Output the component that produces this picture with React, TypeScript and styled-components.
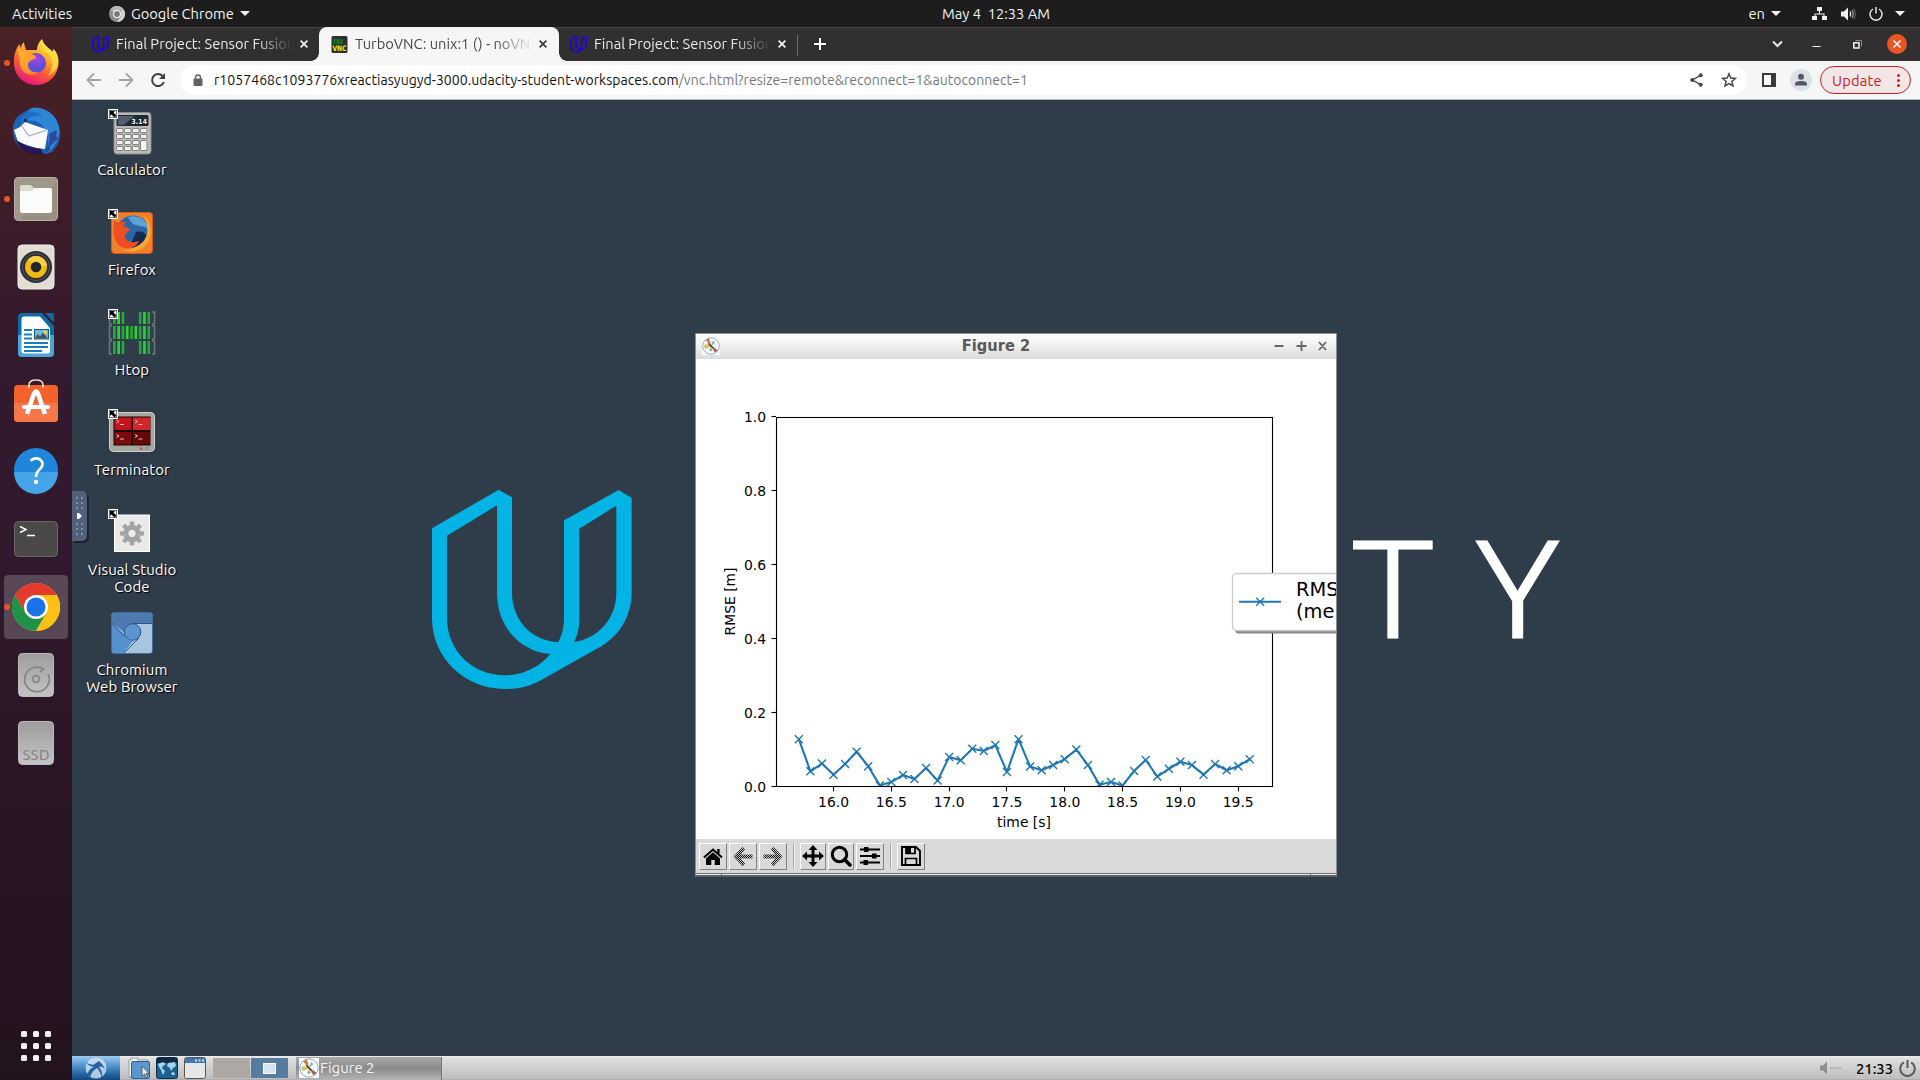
import React from 'react';
import styled, { createGlobalStyle } from 'styled-components';

const Global = createGlobalStyle`
  * { box-sizing: border-box; }
  html, body { margin: 0; padding: 0; background: #2f3c4a; overflow: hidden; }
  svg { display: block; flex: none; }
`;

const ui = `'Ubuntu', 'Noto Sans', 'Open Sans', sans-serif`;

const Screen = styled.div`
  width: 1920px;
  height: 1080px;
  display: flex;
  flex-direction: column;
  overflow: hidden;
  font-family: ${ui};
`;

/* ---------- system top bar ---------- */
const TopBar = styled.header`
  height: 27px;
  flex: none;
  background: #1d1d1d;
  color: #f2f2f2;
  display: grid;
  grid-template-columns: 1fr auto 1fr;
  align-items: center;
  font-size: 14.67px;
  line-height: 26px;
`;
const TopLeft = styled.div`
  display: flex;
  align-items: center;
  padding-left: 12px;
`;
const TopRight = styled.div`
  display: flex;
  align-items: center;
  justify-content: flex-end;
  padding-right: 15px;
`;
const BarText = styled.span<{ $ls?: number; $w?: number; $ml?: number }>`
  letter-spacing: ${p => p.$ls ?? 0}px;
  width: ${p => (p.$w ? `${p.$w}px` : 'auto')};
  margin-left: ${p => p.$ml ?? 0}px;
  white-space: pre;
`;
const Caret = styled.i<{ $ml?: number }>`
  margin-left: ${p => p.$ml ?? 6}px;
  border: 5px solid transparent;
  border-top-color: #f2f2f2;
  border-bottom: 0;
`;
const Gap = styled.i<{ $w: number }>`
  width: ${p => p.$w}px;
  flex: none;
`;

const Body = styled.div`
  flex: 1;
  display: flex;
  min-height: 0;
`;

/* ---------- dock ---------- */
const Dock = styled.nav`
  width: 72px;
  flex: none;
  background: linear-gradient(#4a2124 0, #3f1d28 150px, #331a2e 340px, #2f192c 560px, #24131f 1000px, #22141f 100%);
  display: flex;
  flex-direction: column;
  align-items: center;
  gap: 4px;
  padding-top: 4px;
`;
const DockSlot = styled.div<{ $active?: boolean; $running?: boolean }>`
  width: 64px;
  height: 64px;
  border-radius: 4px;
  flex: none;
  display: grid;
  place-items: center;
  position: relative;
  background: ${p => (p.$active ? 'rgba(255,255,255,.2)' : 'transparent')};
  &::before {
    content: '';
    display: ${p => (p.$running ? 'block' : 'none')};
    position: absolute;
    left: 0;
    top: 29px;
    width: 6px;
    height: 6px;
    border-radius: 50%;
    background: #e95420;
  }
`;
const AppGrid = styled.div`
  margin: auto 0 19px;
  display: grid;
  grid-template-columns: repeat(3, 6px);
  gap: 6px;
  i { width: 6px; height: 6px; border-radius: 1.5px; background: #f4f2f2; }
`;

/* ---------- browser ---------- */
const Browser = styled.main`
  flex: 1;
  min-width: 0;
  display: flex;
  flex-direction: column;
`;
const TabStrip = styled.div`
  height: 34px;
  flex: none;
  background: #322f30;
  border-top: 1px solid #454343;
  display: flex;
  align-items: stretch;
`;
const Tab = styled.div<{ $active?: boolean; $w: number; $pl: number }>`
  width: ${p => p.$w}px;
  flex: none;
  margin-top: -1px;
  padding-left: ${p => p.$pl}px;
  display: flex;
  align-items: center;
  position: relative;
  color: ${p => (p.$active ? '#45474a' : '#e9e9e9')};
  background: ${p => (p.$active ? '#f6f6f7' : 'transparent')};
  border-radius: 8px 8px 0 0;
  &::before, &::after {
    content: '';
    display: ${p => (p.$active ? 'block' : 'none')};
    position: absolute;
    bottom: 0;
    width: 8px;
    height: 8px;
  }
  &::before { left: -8px; background: radial-gradient(circle at 0 0, transparent 7.5px, #f6f6f7 8px); }
  &::after { right: -8px; background: radial-gradient(circle at 100% 0, transparent 7.5px, #f6f6f7 8px); }
`;
const TabTitle = styled.span`
  margin-left: 7px;
  width: 176px;
  overflow: hidden;
  white-space: pre;
  font-size: 14.67px;
  line-height: 30px;
  mask-image: linear-gradient(90deg, #000 140px, transparent 177px);
`;
const TabClose = styled.span`
  margin-left: 8px;
`;
const TabEnd = styled.div`
  width: 1px;
  height: 21px;
  margin-top: 7px;
  background: #6c6a6b;
`;
const NewTab = styled.div`
  margin-left: 16px;
  align-self: center;
  margin-bottom: 1px;
`;
const WinControls = styled.div`
  margin-left: auto;
  padding-right: 13px;
  padding-bottom: 1px;
  display: flex;
  align-items: center;
`;
const Toolbar = styled.div`
  height: 39px;
  flex: none;
  background: #f6f6f7;
  border-bottom: 1px solid #b4b8bb;
  display: flex;
  align-items: center;
  padding-left: 14px;
`;
const Omnibox = styled.div`
  margin-left: 14px;
  width: 1567px;
  height: 30px;
  border-radius: 15px;
  background: #fff;
  display: flex;
  align-items: center;
  padding: 0 10px 0 13px;
  font-size: 14px;
`;
const Url = styled.span`
  margin-left: 11px;
  flex: 1;
  white-space: nowrap;
  color: #111;
`;
const Domain = styled.span`letter-spacing: 0.06px;`;
const Path = styled.span`color: #75787b; letter-spacing: 0.02px;`;
const Avatar = styled.div`
  width: 22px;
  height: 22px;
  border-radius: 50%;
  background: #dee1e6;
  margin-left: 14px;
`;
const Update = styled.div`
  margin-left: 8px;
  width: 91px;
  height: 28px;
  border: 1px solid #c5221f;
  border-radius: 14px;
  background: #f3e6e7;
  color: #c5221f;
  display: flex;
  align-items: center;
  font-size: 14.67px;
  letter-spacing: 0.2px;
  padding: 0 10px 0 11px;
`;
const Dots = styled.span`
  margin-left: auto;
  display: grid;
  gap: 2px;
  i { width: 3px; height: 3px; border-radius: 50%; background: #c5221f; }
`;

/* ---------- remote desktop ---------- */
const Desktop = styled.section`
  flex: 1;
  position: relative;
  background: #2f3c4a;
  overflow: hidden;
`;
const Wallmark = styled.div`
  position: absolute;
  left: 348px;
  top: 380px;
`;
const Letter = styled.span<{ $x: number; $sx: number }>`
  position: absolute;
  left: ${p => p.$x}px;
  top: 394px;
  color: #fff;
  font: 300 132px/184px 'Open Sans', 'Noto Sans', sans-serif;
  -webkit-text-stroke: 3px #fff;
  transform: scaleX(${p => p.$sx});
  transform-origin: 0 0;
`;
const IconColumn = styled.div`
  width: 120px;
  display: grid;
  grid-auto-rows: 100px;
  padding-top: 8px;
`;
const Shortcut = styled.div`
  display: flex;
  flex-direction: column;
  align-items: center;
  color: #fff;
  font-size: 15px;
  letter-spacing: 0.1px;
  line-height: 17px;
  text-align: center;
  white-space: pre-line;
  text-shadow: 1px 1px 1px #000;
`;
const Glyph = styled.div`
  width: 48px;
  height: 48px;
  margin-bottom: 5px;
  position: relative;
`;
const Badge = styled.div`
  position: absolute;
  left: 0;
  top: 1px;
`;
const Handle = styled.div`
  position: absolute;
  left: 0;
  top: 391px;
  width: 15px;
  height: 50px;
  background: #4f6078;
  border-radius: 0 5px 5px 0;
  box-shadow: 2px 2px 0 #1c242e;
`;

const Figure = styled.div`
  position: absolute;
  left: 623px;
  top: 233px;
  width: 642px;
  height: 544px;
  border: 1px solid #8a8f94;
  border-bottom: 2px solid #5c6268;
  background: #d9d9d9;
  display: flex;
  flex-direction: column;
`;
const TitleBar = styled.div`
  height: 25px;
  flex: none;
  background: linear-gradient(#fff, #f2f2f2 40%, #dcdcdc);
  display: flex;
  align-items: center;
  padding: 0 8px 1px 6px;
`;
const Title = styled.div`
  flex: 1;
  text-align: center;
  color: #5a5a5a;
  font: bold 16.3px/22px 'DejaVu Sans Condensed', 'DejaVu Sans', sans-serif;
  font-stretch: condensed;
`;
const FigTools = styled.div`
  height: 34px;
  display: flex;
  align-items: center;
  padding-left: 3px;
  gap: 2px;
`;
const ToolButton = styled.div<{ $w?: number }>`
  width: ${p => p.$w ?? 28}px;
  height: 27px;
  border: 1px solid;
  border-color: #fff #828282 #828282 #fff;
  display: grid;
  place-items: center;
`;
const ToolSep = styled.div`
  width: 2px;
  height: 26px;
  margin: 0 3px 0 4px;
  border-left: 1px solid #a8a8a8;
  border-right: 1px solid #f2f2f2;
`;
const Grip = styled.div`
  flex: 1;
  border-top: 1px solid #6e6e6e;
  background: #efefef;
  display: flex;
  justify-content: space-between;
  padding: 0 25px;
  i { width: 1px; background: #555; }
`;

const Panel = styled.footer`
  height: 24px;
  flex: none;
  display: flex;
  align-items: center;
  background: linear-gradient(#ececec 0, #dedede 12%, #bdbdbd 95%, #a5a5a5);
`;
const StartButton = styled.div`
  width: 48px;
  height: 24px;
  background: linear-gradient(#9ccbef, #5b9dd2 35%, #1f5f9a 80%, #174a7c);
  display: grid;
  place-items: center;
`;
const Launchers = styled.div`
  display: flex;
  gap: 6px;
  margin-left: 8px;
`;
const Desk = styled.div<{ $current?: boolean }>`
  width: 37px;
  height: 20px;
  margin-right: 1px;
  background: ${p => (p.$current ? '#567ca0' : '#ada8a3')};
  display: grid;
  place-items: center;
  i { width: 13px; height: 11px; background: #d6e4f1; border: 1px solid #fff; }
`;
const Task = styled.div`
  width: 146px;
  height: 23px;
  margin-left: 7px;
  padding-left: 3px;
  border-right: 1px solid #777;
  background: linear-gradient(#a8a8a8, #8b8b8b 50%, #b4b4b4);
  display: flex;
  align-items: center;
  color: #f3f3f3;
  font-size: 15px;
  line-height: 20px;
  letter-spacing: 0.15px;
`;
const Tray = styled.div`
  margin-left: auto;
  padding-right: 4px;
  display: flex;
  align-items: center;
`;
const Clock = styled.span`
  margin: 0 6px 0 14px;
  color: #000;
  font-size: 15px;
  font-weight: 500;
  letter-spacing: -0.1px;
`;

/* ---------- drawings ---------- */
const U_PATH =
  'M36 145L236 29L276 52V338C276 420 335 483 415 486C427 465 432 440 432 415V121L596 30L635 54V338C635 415 590 475 533 505L360 602C330 618 300 627 255 627C130 627 36 530 36 415ZM81 167L231 76V338C231 440 300 515 391 522C360 560 310 586 255 586C155 586 81 510 81 415ZM478 146L589 77V338C589 415 535 475 462 486C474 465 478 440 478 415Z';

const UFavicon = () => (
  <svg width="17" height="18" viewBox="30 20 612 620"><path d={U_PATH} fill="#1d00f5" fillRule="evenodd" stroke="#1d00f5" strokeWidth="8" /></svg>
);

const NoVncIcon = () => (
  <svg width="17" height="17" viewBox="0 0 17 17">
    <rect x=".5" width="16" height="17" rx="1.500" fill="#2d3033" />
    <text x="2" y="8" fontFamily="DejaVu Sans" fontWeight="700" fontSize="8" fill="#0a8a14" textLength="10">no</text>
    <text x="1.500" y="15" fontFamily="DejaVu Sans" fontWeight="700" fontSize="7.500" fill="#f1ee10" textLength="14" lengthAdjust="spacingAndGlyphs">VNC</text>
  </svg>
);

const Cross = ({ color, size = 8, w = 1.8 }: { color: string; size?: number; w?: number }) => (
  <svg width={size} height={size} viewBox="0 0 8 8"><path d="M.6.6l6.8 6.8M7.4.6L.6 7.4" stroke={color} strokeWidth={w} /></svg>
);

const MplIcon = ({ s = 18 }: { s?: number }) => (
  <svg width={s} height={s} viewBox="0 0 20 20">
    <rect width="20" height="20" fill="#fff" />
    <circle cx="10" cy="10" r="9.2" fill="#fcfdfe" stroke="#6f9bbd" strokeWidth=".9" />
    <circle cx="10" cy="10" r="5" fill="none" stroke="#c6ced6" strokeWidth=".6" />
    <path d="M10 10L4.6 3.4L7.6 1.8Z" fill="#e07838" stroke="#8a4a20" strokeWidth=".4" />
    <path d="M10 10L2.6 9.4L3.8 12.4Z" fill="#f1cf3c" stroke="#8d7a20" strokeWidth=".5" />
    <path d="M10 10L4 7.8L3.4 11Z" fill="#e8c53c" />
    <path d="M10 10L12.6 4.4L14 6Z" fill="#8fc08a" stroke="#557" strokeWidth=".3" />
    <path d="M10 10L8.6 15.6L11 15.4Z" fill="#5aa06a" />
    <path d="M10 10L14.6 17L17.2 14.8Z" fill="#c9603a" stroke="#6a3320" strokeWidth=".4" />
    <path d="M7 7.4L12.6 12.2" stroke="#333" strokeWidth="1.2" />
  </svg>
);

const ffDefs = (
  <defs>
    <linearGradient id="ffa" x1=".8" y1="0" x2=".3" y2="1"><stop offset="0" stopColor="#fff24a" /><stop offset=".35" stopColor="#ffb128" /><stop offset=".65" stopColor="#ff5a36" /><stop offset="1" stopColor="#e3127f" /></linearGradient>
    <radialGradient id="ffb" cx=".55" cy=".3"><stop offset="0" stopColor="#a546e8" /><stop offset="1" stopColor="#5b4fd8" /></radialGradient>
    <linearGradient id="ffc" x1="0" y1="0" x2="1" y2="1"><stop offset="0" stopColor="#ffc22c" /><stop offset="1" stopColor="#ff7c30" /></linearGradient>
  </defs>
);

const DockFirefox = () => (
  <svg width="48" height="48" viewBox="0 0 48 48">
    {ffDefs}
    <path d="M30 0C26 4 25 8 25 11L14 11C13 8 12 5 12 3C10 5 9 7 9 9C8 8 7.500 6 7.500 5C3 11 1.500 18 2 25C2.500 37 12 46 24 46C37 46 46.500 36 46.500 23C46.500 17 44 12 41 10C41 11 41.500 12 41 13C37 9 31 6 30 0Z" fill="url(#ffa)" />
    <path d="M30 0C28 8 31 12 36 15C42 20 42 31 35 37C44 34 47.500 25 46 18C45 14 43 11 41 10C41 11 41.500 12 41 13C37 9 31 6 30 0Z" fill="#ffe14a" opacity=".75" />
    <circle cx="24" cy="24" r="10" fill="url(#ffb)" />
    <path d="M5 8C8 13 15 13 19 15C24 16 25 18 23 20C20 21 17 22 16 25C16 31 20 34 26 33C22 38 12 36 9 29C7 23 8 16 5 8Z" fill="url(#ffc)" />
  </svg>
);

const DockThunderbird = () => (
  <svg width="48" height="48" viewBox="0 0 48 48">
    <path d="M17 2C24-1 34 1 41 8C48 16 50 28 46 37L40 45L33 47L24 43L8 41C3 36 0 28 1 20C2 13 6 8 12 5Z" fill="#1c61b8" />
    <path d="M20 1C32-1 44 7 47 20C48 29 45 39 34 47C39 38 36 29 33 23C29 13 18 12 12 15C14 10 16 4 20 1Z" fill="#2f86d4" />
    <path d="M11 9C16 3 25 3 31 10C24 7 16 10 10 18C8 14 9 11 11 9Z" fill="#1f6fc9" />
    <path d="M2 23L8 20L13 15L36 23L33 42L24 41L6 35Z" fill="#fafafc" />
    <path d="M9 18L17 29L35 23" fill="none" stroke="#a9adb9" strokeWidth="1.1" />
    <path d="M4 33L15 39L29 42L31 47C19 49 7 44 4 33Z" fill="#281653" />
    <path d="M37 27L45 23L44 30L47 31L38 39L38 43L32 47C38 40 38 33 37 27Z" fill="#31449e" />
    <circle cx="13.500" cy="13.500" r="1.700" fill="#16294f" />
  </svg>
);

const DockFiles = () => (
  <svg width="46" height="46" viewBox="0 0 46 46">
    <rect x="1" y="1" width="44" height="44" rx="4.500" fill="#989080" />
    <path d="M5 1H45V5L5 45Q1 45 1 40V5Q1 1 5 1Z" fill="#fff" opacity=".07" />
    <rect x="1.500" y="1.500" width="43" height="43" rx="4.500" fill="none" stroke="#b6af9f" />
    <path d="M7 11Q7 9 9 9H17Q18.500 9 19.500 10.500L21 12H32V25H7Z" fill="#dedbd0" />
    <path d="M7 16Q7 15 9 15H19L21.500 12.500Q22 12 24 12H37Q39 12 39 14V34.500Q39 37 36.500 37H9.500Q7 37 7 34.500Z" fill="#fbfbfa" />
  </svg>
);

const DockRhythmbox = () => (
  <svg width="38" height="46" viewBox="0 0 38 46">
    <rect x="1" y="1" width="36" height="44" rx="4" fill="#e2ddd3" stroke="#f1eee8" />
    <circle cx="19" cy="23" r="16" fill="#2d3037" />
    <circle cx="19" cy="23" r="13.600" fill="none" stroke="#5a5c60" strokeWidth=".8" />
    <circle cx="19" cy="23" r="11" fill="#f0b90f" />
    <path d="M19 23L11 15.500A11 11 0 0 1 30 22Z" fill="#f8cf40" />
    <circle cx="19" cy="23" r="5.300" fill="#24262c" />
  </svg>
);

const DockWriter = () => (
  <svg width="38" height="46" viewBox="0 0 38 46">
    <path d="M5 1H25L37 14V41Q37 45 33 45H5Q1 45 1 41V5Q1 1 5 1Z" fill="#0d6ba5" />
    <path d="M1 23H37V41Q37 45 33 45H5Q1 45 1 41Z" fill="#4ba5d6" />
    <path d="M28 1H35Q37 1 37 3V11Z" fill="#13689c" />
    <path d="M7 4.500H23L33 16V39Q33 41.500 31 41.500H7Q4.500 41.500 4.500 39V7Q4.500 4.500 7 4.500Z" fill="#fff" />
    <path d="M7 18H15M7 22.500H15M7 26.500H15M7 31H31M7 35H31M7 39H25" stroke="#1b7cbc" strokeWidth="1.800" />
    <rect x="17.500" y="17.500" width="14" height="9.500" fill="#6db7df" stroke="#145a86" />
    <circle cx="28" cy="20.500" r="2" fill="#f7cc3e" />
    <path d="M18 26.500L21 22L23 24.500L26 20.500L31 26.500Z" fill="#48545c" />
  </svg>
);

const DockSoftware = () => (
  <svg width="46" height="48" viewBox="0 0 46 48">
    <rect x="1" y="6" width="44" height="37" rx="4" fill="#f4622c" />
    <path d="M1 24H45V39Q45 43 41 43H5Q1 43 1 39Z" fill="#f5774a" />
    <path d="M16 9V6Q16 1 23 1T30 6V9" fill="none" stroke="#f0d9b6" strokeWidth="1.700" />
    <path d="M14 35L20.500 16Q23 9 25.500 16L32 35" fill="none" stroke="#fff" strokeWidth="4.600" />
    <path d="M11 28H35" stroke="#fff" strokeWidth="4" strokeLinecap="round" />
  </svg>
);

const DockHelp = () => (
  <svg width="46" height="48" viewBox="0 0 46 48">
    <circle cx="23" cy="23" r="22" fill="#1f86dc" />
    <path d="M1 25A22 22 0 0 0 45 25Z" fill="#45a4e8" />
    <path d="M17.500 13.500Q23 10 27 12.500Q31.500 16 28 21Q23 25 23 30" fill="none" stroke="#fff" strokeWidth="2.700" />
    <circle cx="23" cy="35" r="2.200" fill="#fff" />
  </svg>
);

const DockTerminal = () => (
  <svg width="46" height="38" viewBox="0 0 46 38">
    <rect x="1.500" y="1.500" width="43" height="35" rx="4" fill="#4a4948" stroke="#6b6968" />
    <path d="M7 6.500L13 9.500L7 12.500" fill="none" stroke="#fff" strokeWidth="1.500" />
    <path d="M14 15.500H22" stroke="#fff" strokeWidth="1.500" />
  </svg>
);

const DockChrome = () => (
  <svg width="48" height="48" viewBox="0 0 48 48">
    <circle cx="24" cy="24" r="24" fill="#fbc116" />
    <path d="M3.200 12A24 24 0 0 1 44.800 12H24Z" fill="#e33b2e" />
    <path d="M3.200 12A24 24 0 0 0 24 48L34.400 30L24 24L13.600 30Z" fill="#1f9149" />
    <path d="M3.200 12L13.600 30L24 24V12Z" fill="#e33b2e" />
    <path d="M24 48L34.400 30L24 24V12H44.800A24 24 0 0 1 24 48Z" fill="#fbc116" />
    <circle cx="24" cy="24" r="12" fill="#fff" />
    <circle cx="24" cy="24" r="9.500" fill="#1a73e8" />
  </svg>
);

const DriveBase = ({ children, id }: { children: React.ReactNode; id: string }) => (
  <svg width="38" height="46" viewBox="0 0 38 46">
    <defs><linearGradient id={id} x2="0" y2="1"><stop offset="0" stopColor="#9d9d9d" /><stop offset="1" stopColor="#c4c4c4" /></linearGradient></defs>
    <rect x="1.500" y="1.500" width="35" height="43" rx="4" fill={`url(#${id})`} stroke="#bcbcbc" />
    {children}
  </svg>
);
const DockDisk = () => (
  <DriveBase id="dg1">
    <path d="M31 22A12.300 12.300 0 1 1 26.500 17L23 20" fill="none" stroke="#858585" strokeWidth="1.700" />
    <circle cx="19" cy="27" r="3.300" fill="none" stroke="#858585" strokeWidth="1.700" />
  </DriveBase>
);
const DockSsd = () => (
  <DriveBase id="dg2">
    <text x="5.500" y="40" fontFamily="Noto Sans" fontSize="15" fill="#858585" textLength="27" lengthAdjust="spacingAndGlyphs">SSD</text>
  </DriveBase>
);

const LinkBadge = () => (
  <svg width="10" height="10" viewBox="0 0 10 10">
    <rect width="10" height="10" fill="#fff" />
    <rect x="1" y="1" width="8" height="8" fill="#000" />
    <path d="M1.500 1.500H8.500V8.500H1.500Z" fill="#fff" />
    <path d="M2 2H7L5.500 3.500L8.500 6.500L6.500 8.500L3.500 5.500L2 7Z" fill="#000" />
  </svg>
);

const Calculator = () => (
  <svg width="48" height="48" viewBox="0 0 48 48">
    <rect x="6" y="4.500" width="37" height="41.500" rx="3" fill="#b9b9b6" stroke="#8c8c8a" />
    <rect x="8.500" y="7" width="32" height="11" rx="1.500" fill="#1e2b38" />
    <path d="M10 8H26L16 17H10Z" fill="#74808d" opacity=".6" />
    <text x="23.500" y="15.500" fontFamily="DejaVu Sans" fontWeight="700" fontSize="7" fill="#fff" textLength="15.500" lengthAdjust="spacingAndGlyphs">3.14</text>
    {[0, 1, 2, 3].map(r => [0, 1, 2, 3].map(c =>
      r === 3 && c === 3 ? null : (
        <rect key={`${r}${c}`} x={8.500 + c * 8} y={20.500 + r * 6} width="6.500" height={r === 2 && c === 3 ? 10 : 4} rx="1" fill="#f2f2f2" stroke="#6b6b69" strokeWidth=".8" />
      )))}
  </svg>
);

const OldFirefox = () => (
  <svg width="48" height="48" viewBox="0 0 48 48">
    <rect x="3.500" y="4.500" width="41" height="41" rx="3" fill="#f0812c" stroke="#d9581a" />
    <circle cx="25" cy="24" r="16.500" fill="#2b67a5" />
    <path d="M20 9C30 6 40 12 41 22C36 16 30 20 24 15Z" fill="#5fa3d6" />
    <path d="M28 24C36 22 40 27 38 33C34 40 26 41 22 38Z" fill="#142c55" />
    <path d="M6 12C9 16 12 13 18 14L15 18L22 21C20 25 16 25 17 29C19 35 26 35 31 33C27 42 15 43 9 35C5 29 5 19 6 12Z" fill="#ee4e22" />
    <path d="M36 8C44 14 46 27 38 37C33 43 23 45 15 42C28 41 37 35 39 26C40 19 39 13 36 8Z" fill="#fba62e" />
  </svg>
);

const Htop = () => {
  const rows = [[4, 12], [18, 13], [33, 13]];
  return (
    <svg width="48" height="48" viewBox="0 0 48 48">
      {rows.map(([y, h], r) => (
        <g key={y}>
          <path d={`M4 ${y}H1.500V${y + h}H4M44 ${y}H46.500V${y + h}H44`} fill="none" stroke="#72777b" strokeWidth="1.500" />
          {Array.from({ length: 9 }, (_, i) => i).filter(i => r === 1 || i < 3 || i > 5).map(i => (
            <rect key={i} x={5 + i * 4.300} y={y} width="2.700" height={h} fill={i % 2 ? '#2fce3c' : '#25a833'} />
          ))}
        </g>
      ))}
    </svg>
  );
};

const Terminator = () => (
  <svg width="48" height="48" viewBox="0 0 48 48">
    <rect x="1.500" y="4.500" width="45" height="39" rx="4" fill="#a5a69f" stroke="#cfd0ca" />
    <rect x="5.500" y="8.500" width="37" height="29" fill="#1b0505" />
    {[[6.500, 9.500, '#c3141b'], [25, 9.500, '#d6242b'], [6.500, 24, '#7c0a0e'], [25, 24, '#680709']].map(([x, y, f]) => (
      <g key={`${x}${y}`}>
        <rect x={x} y={y} width="17" height="12.500" fill={f as string} />
        <path d={`M${+x + 2} ${+y + 2.500}l2.500 1.500l-2.500 1.500M${+x + 5.500} ${+y + 7}h4`} fill="none" stroke="#f4d5d5" strokeWidth=".9" />
      </g>
    ))}
    <circle cx="33" cy="40.500" r="1.200" fill="#f03050" />
    <circle cx="39" cy="40.500" r="1.200" fill="none" stroke="#777" strokeWidth=".6" />
  </svg>
);

const VsCode = () => (
  <svg width="48" height="48" viewBox="0 0 48 48">
    <rect x="6.500" y="7" width="35" height="36.500" fill="#e9e9e9" stroke="#fff" />
    <g transform="translate(24 25.500)">
      {[0, 45, 90, 135].map(a => <rect key={a} x="-2.200" y="-12" width="4.400" height="24" rx="1" fill="#a4a4a4" transform={`rotate(${a})`} />)}
      <circle r="6.300" fill="none" stroke="#a4a4a4" strokeWidth="5" />
      <circle r="4.200" fill="#ececec" stroke="#8e8e8e" strokeWidth=".8" />
    </g>
  </svg>
);

const Chromium = () => (
  <svg width="48" height="48" viewBox="0 0 48 48">
    <rect x="3.500" y="4.500" width="41" height="41" rx="3" fill="#90b6da" stroke="#3f6da4" />
    <path d="M4 7Q4 5 6 5H42Q44 5 44 7V15.500H24L16 24L4 15Z" fill="#4d7bb0" />
    <path d="M4 15L16 27Q19 33 25 33L16 45H6Q4 45 4 43Z" fill="#5590cf" />
    <path d="M25 33L16 45H42Q44 45 44 43V15.500H26Q33 18 33 25Q32 31 25 33Z" fill="#a8c5de" />
    <path d="M44 15.500H24M16 28L4 15M31 30L16 45" stroke="#264e82" strokeWidth=".9" fill="none" />
    <circle cx="24.500" cy="24" r="8.300" fill="#5f93d0" stroke="#29538a" strokeWidth="1" />
  </svg>
);

const rmse = [
  0.128, 0.041, 0.062, 0.032, 0.061, 0.094, 0.055, 0.003, 0.012, 0.031, 0.02, 0.05, 0.016, 0.08, 0.071, 0.102, 0.096, 0.112, 0.039, 0.128,
  0.054, 0.044, 0.058, 0.074, 0.1, 0.058, 0.005, 0.012, 0.003, 0.042, 0.072, 0.027, 0.048, 0.067, 0.058, 0.032, 0.061, 0.044, 0.055, 0.074,
];
const px = (t: number) => 80.3 + ((t - 15.505) / 4.29) * 496;
const py = (v: number) => 427.5 - v * 369.500;

const Plot = () => {
  const pts = rmse.map((v, i) => [px(15.7 + i * 0.1), py(v)]);
  return (
    <svg width="640" height="480" viewBox="0 0 640 480" fontFamily="DejaVu Sans" fontSize="13.900">
      <defs><clipPath id="ax"><rect x="80" y="58" width="497" height="370" /></clipPath></defs>
      <rect width="640" height="480" fill="#fff" />
      <g clipPath="url(#ax)" stroke="#1f77b4" fill="none">
        <polyline points={pts.map(p => p.join(',')).join(' ')} strokeWidth="2.100" strokeLinejoin="round" />
        <path d={pts.map(([x, y]) => `M${x - 4} ${y - 4}l8 8m0 -8l-8 8`).join('')} strokeWidth="1.400" />
      </g>
      <rect x="80.500" y="58.500" width="496" height="369" fill="none" stroke="#000" strokeWidth="1.100" />
      {[0, 0.2, 0.4, 0.6, 0.8, 1].map(v => (
        <g key={v}>
          <path d={`M75.500 ${Math.round(py(v)) - 0.5}H80`} stroke="#000" strokeWidth="1.100" />
          <text x="70" y={py(v) + 5} textAnchor="end">{v.toFixed(1)}</text>
        </g>
      ))}
      {[16, 16.5, 17, 17.5, 18, 18.5, 19, 19.5].map(t => (
        <g key={t}>
          <path d={`M${Math.floor(px(t)) + 0.5} 428V432.500`} stroke="#000" strokeWidth="1.100" />
          <text x={px(t)} y="448" textAnchor="middle">{t.toFixed(1)}</text>
        </g>
      ))}
      <text x="328" y="467.500" textAnchor="middle">time [s]</text>
      <text transform="translate(38.500 242.500) rotate(-90)" textAnchor="middle">RMSE [m]</text>
      <rect x="539" y="217" width="140" height="57.500" rx="4" fill="#888" />
      <rect x="536.500" y="214.500" width="140" height="57" rx="4" fill="#fff" stroke="#ccc" strokeWidth="1.300" />
      <path d="M543 242.800H585" stroke="#1f77b4" strokeWidth="2.100" />
      <path d="M560.200 238.800l8 8m0 -8l-8 8" stroke="#1f77b4" strokeWidth="1.400" />
      <g fontSize="19.400"><text x="600" y="237">RMS</text><text x="600" y="259">(me</text></g>
    </svg>
  );
};

const tool = { width: 24, height: 24, viewBox: '0 0 24 24' };
const HomeIcon = () => (
  <svg {...tool}><path d="M12 4.200L2.300 12.800L3.600 14.200L12 6.900L20.400 14.200L21.700 12.800L18.600 10V5H16.200V7.900Z" /><path d="M12 8.300L5 14.400V21H10.300V16H13.700V21H19V14.400Z" /></svg>
);
const ArrowIcon = ({ flip }: { flip?: boolean }) => (
  <svg {...tool}>
    <defs><pattern id="stipple" width="2" height="2" patternUnits="userSpaceOnUse"><rect width="2" height="2" fill="#c4c4c4" /><rect width="1" height="1" fill="#111" /><rect x="1" y="1" width="1" height="1" fill="#111" /></pattern></defs>
    <path transform={flip ? 'translate(24 0) scale(-1 1)' : undefined} d="M2.500 12.500L11.500 3L14 5.500L9.500 10.500H21.500V14.500H9.500L14 19.500L11.500 22Z" fill="url(#stipple)" />
  </svg>
);
const PanIcon = () => (
  <svg {...tool}><path d="M12 1L16.500 6H13.500V10.500H18V7.500L23 12L18 16.500V13.500H13.500V18H16.500L12 23L7.500 18H10.500V13.500H6V16.500L1 12L6 7.500V10.500H10.500V6H7.500Z" /></svg>
);
const ZoomIcon = () => (
  <svg {...tool}><circle cx="10.500" cy="10.500" r="7.200" fill="none" stroke="#000" strokeWidth="3" /><path d="M15.500 15.500L21 21" stroke="#000" strokeWidth="3.600" strokeLinecap="round" /></svg>
);
const SlidersIcon = () => (
  <svg {...tool}><path d="M2 5.500H22M2 12H22M2 18.500H22" stroke="#000" strokeWidth="1.800" /><path d="M6 3h4.500v5h-4.500zM14 9.500h4.500v5h-4.500zM5.500 16h4.500v5h-4.500z" /></svg>
);
const SaveIcon = () => (
  <svg {...tool}><path d="M3 3H17L21 7V21H3Z" fill="none" stroke="#000" strokeWidth="1.900" /><path d="M7 3.500V9.500H16V3.500M6.500 20.500V14.500H17.500V20.500" fill="none" stroke="#000" strokeWidth="1.700" /><path d="M7 3H12V9H7Z" /></svg>
);

const dockItems: { Icon: React.FC; running?: boolean; active?: boolean }[] = [
  { Icon: DockFirefox, running: true }, { Icon: DockThunderbird }, { Icon: DockFiles, running: true }, { Icon: DockRhythmbox },
  { Icon: DockWriter }, { Icon: DockSoftware }, { Icon: DockHelp }, { Icon: DockTerminal },
  { Icon: DockChrome, running: true, active: true }, { Icon: DockDisk }, { Icon: DockSsd },
];
const shortcuts: { Icon: React.FC; name: string; link?: boolean }[] = [
  { Icon: Calculator, name: 'Calculator', link: true }, { Icon: OldFirefox, name: 'Firefox', link: true }, { Icon: Htop, name: 'Htop', link: true },
  { Icon: Terminator, name: 'Terminator', link: true }, { Icon: VsCode, name: 'Visual Studio\nCode', link: true }, { Icon: Chromium, name: 'Chromium\nWeb Browser' },
];

const Speaker = () => (
  <svg width="15" height="14" viewBox="0 0 15 14"><path d="M0 4.500H3L7 .5V13.500L3 9.500H0Z" fill="#f2f2f2" /><path d="M9 4.500Q10.500 7 9 9.500" stroke="#f2f2f2" fill="none" strokeWidth="1.300" /><path d="M11 3Q13.500 7 11 11" stroke="#aaa" fill="none" strokeWidth="1.200" /><path d="M12.800 1.500Q16 7 12.800 12.500" stroke="#666" fill="none" /></svg>
);
const Power = ({ color = '#f2f2f2', w = 1.4, s = 14 }) => (
  <svg width={s} height={s} viewBox="0 0 14 14"><path d="M4 2A6 6 0 1 0 10 2M7 0V6.500" fill="none" stroke={color} strokeWidth={w} /></svg>
);

export default function App() {
  return (
    <Screen>
      <Global />
      <TopBar>
        <TopLeft>
          <BarText $w={97}>Activities</BarText>
          <svg width="16" height="16" viewBox="0 0 16 16"><circle cx="8" cy="8" r="8" fill="#8e8e8e" /><path d="M8 8L1 4A8 8 0 0 1 15 4H8Z" fill="#b7b7b7" /><path d="M8 16L12 10V4H15A8 8 0 0 1 8 16Z" fill="#cfcfcf" /><circle cx="8" cy="8" r="3.900" fill="#fff" /><circle cx="8" cy="8" r="2.900" fill="#777" /></svg>
          <BarText $ml={6}>Google Chrome</BarText>
          <Caret />
        </TopLeft>
        <BarText $ml={72}>May 4  12:33 AM</BarText>
        <TopRight>
          <BarText>en</BarText>
          <Caret $ml={6} />
          <Gap $w={31} />
          <svg width="15" height="13" viewBox="0 0 15 13"><path d="M5 0h5v4h-2v2.500h4.500V9H15v4H10V9h1.500V7.500h-8V9H5v4H0V9h2.500V6.500H7V4H5Z" fill="#f2f2f2" /></svg>
          <Gap $w={14} />
          <Speaker />
          <Gap $w={13} />
          <Power />
          <Caret $ml={12} />
        </TopRight>
      </TopBar>
      <Body>
        <Dock>
          {dockItems.map(({ Icon, running, active }, i) => (
            <DockSlot key={i} $running={running} $active={active}><Icon /></DockSlot>
          ))}
          <AppGrid>{Array.from({ length: 9 }, (_, i) => <i key={i} />)}</AppGrid>
        </Dock>
        <Browser>
          <TabStrip>
            <Tab $w={247} $pl={20}>
              <UFavicon /><TabTitle>Final Project: Sensor Fusion</TabTitle><TabClose><Cross color="#f0f0f0" /></TabClose>
            </Tab>
            <Tab $w={240} $pl={12} $active>
              <NoVncIcon /><TabTitle>TurboVNC: unix:1 () - noVNC</TabTitle><TabClose><Cross color="#3c4043" /></TabClose>
            </Tab>
            <Tab $w={238} $pl={11}>
              <UFavicon /><TabTitle>Final Project: Sensor Fusion</TabTitle><TabClose><Cross color="#f0f0f0" /></TabClose>
            </Tab>
            <TabEnd />
            <NewTab><svg width="12" height="12" viewBox="0 0 12 12"><path d="M6 0V12M0 6H12" stroke="#fff" strokeWidth="2" /></svg></NewTab>
            <WinControls>
              <svg width="11" height="8" viewBox="0 0 11 8"><path d="M1 1.500L5.500 6L10 1.500" fill="none" stroke="#e8e8e8" strokeWidth="2" /></svg>
              <Gap $w={29} />
              <svg width="9" height="8" viewBox="0 0 9 8"><path d="M.5 6.500H8.500" stroke="#fff" /></svg>
              <Gap $w={32} />
              <svg width="9" height="9" viewBox="0 0 9 9"><path d="M2.500 .5H8.500V6.500" fill="none" stroke="#8c8c8c" /><rect x=".8" y="2.800" width="5.200" height="5.200" fill="none" stroke="#fff" strokeWidth="1.400" /></svg>
              <Gap $w={25} />
              <svg width="20" height="20" viewBox="0 0 20 20"><circle cx="10" cy="10" r="10" fill="#e95420" /><path d="M6.500 6.500l7 7m0-7l-7 7" stroke="#fff" strokeWidth="1.500" /></svg>
            </WinControls>
          </TabStrip>
          <Toolbar>
            <svg width="16" height="16" viewBox="0 0 16 16"><path d="M15 8H2M8 1.500L1.500 8L8 14.500" fill="none" stroke="#a3a3a3" strokeWidth="1.800" /></svg>
            <Gap $w={16} />
            <svg width="16" height="16" viewBox="0 0 16 16"><path d="M1 8H14M8 1.500L14.500 8L8 14.500" fill="none" stroke="#a3a3a3" strokeWidth="1.800" /></svg>
            <Gap $w={16} />
            <svg width="16" height="16" viewBox="0 0 16 16"><path d="M13.800 10A6 6 0 1 1 12.500 4" fill="none" stroke="#3f4043" strokeWidth="2" /><path d="M15 1V7H9Z" fill="#3f4043" /></svg>
            <Omnibox>
              <svg width="10" height="12" viewBox="0 0 10 12"><rect x=".5" y="4.500" width="9" height="7.500" rx="1" fill="#5f6368" /><path d="M2.500 5V3.200Q2.500 1 5 1T7.500 3.200V5" fill="none" stroke="#5f6368" strokeWidth="1.400" /></svg>
              <Url><Domain>r1057468c1093776xreactiasyugyd-3000.udacity-student-workspaces.com</Domain><Path>/vnc.html?resize=remote&amp;reconnect=1&amp;autoconnect=1</Path></Url>
              <svg width="13" height="14" viewBox="0 0 13 14"><path d="M10.500 2.300L2.500 7L10.500 11.700" fill="none" stroke="#46484b" strokeWidth="1.400" /><circle cx="10.700" cy="2.300" r="2" fill="#46484b" /><circle cx="2.300" cy="7" r="2" fill="#46484b" /><circle cx="10.700" cy="11.700" r="2" fill="#46484b" /></svg>
              <Gap $w={18} />
              <svg width="16" height="16" viewBox="0 0 16 16"><path d="M8 1.800L9.800 6L14.400 6.400L10.900 9.400L12 13.900L8 11.500L4 13.900L5.100 9.400L1.600 6.400L6.200 6Z" fill="none" stroke="#46484b" strokeWidth="1.500" /></svg>
            </Omnibox>
            <Gap $w={15} />
            <svg width="14" height="14" viewBox="0 0 14 14"><rect width="14" height="14" fill="#3a3a3c" /><rect x="2" y="2" width="7" height="10" fill="#fff" /></svg>
            <Avatar><svg width="22" height="22" viewBox="0 0 22 22"><circle cx="11" cy="7.800" r="3" fill="#50596b" /><path d="M5 16.500V15Q5 12 11 12T17 15V16.500Z" fill="#50596b" /></svg></Avatar>
            <Update>Update<Dots><i /><i /><i /></Dots></Update>
          </Toolbar>
          <Desktop>
            <Wallmark><svg width="230" height="220" viewBox="0 0 690 660"><path d={U_PATH} fill="#02b3e4" fillRule="evenodd" /></svg></Wallmark>
            <Letter $x={1282} $sx={1.124}>T</Letter>
            <Letter $x={1406} $sx={1.135}>Y</Letter>
            <IconColumn>
              {shortcuts.map(({ Icon, name, link }) => (
                <Shortcut key={name}>
                  <Glyph><Icon />{link && <Badge><LinkBadge /></Badge>}</Glyph>
                  {name}
                </Shortcut>
              ))}
            </IconColumn>
            <Handle>
              <svg width="15" height="50" viewBox="0 0 15 50">
                {[7, 12, 17, 33, 38, 43].map(y => <path key={y} d={`M4 ${y}h2M9 ${y}h2`} stroke="#8492a6" strokeWidth="2" />)}
                <path d="M5 22H7L10 25L7 28H5Z" fill="#fff" />
              </svg>
            </Handle>
            <Figure>
              <TitleBar>
                <MplIcon />
                <Title>Figure 2</Title>
                <svg width="56" height="12" viewBox="0 0 56 12"><path d="M3.500 6H12.500M25.500 6H35.500M30.500 1V11M48 2L55 10M55 2L48 10" transform="translate(-1 0)" fill="none" stroke="#666" strokeWidth="1.800" /></svg>
              </TitleBar>
              <Plot />
              <FigTools>
                <ToolButton><HomeIcon /></ToolButton>
                <ToolButton><ArrowIcon /></ToolButton>
                <ToolButton><ArrowIcon flip /></ToolButton>
                <ToolSep />
                <ToolButton $w={26}><PanIcon /></ToolButton>
                <ToolButton $w={26}><ZoomIcon /></ToolButton>
                <ToolButton><SlidersIcon /></ToolButton>
                <ToolSep />
                <ToolButton><SaveIcon /></ToolButton>
              </FigTools>
              <Grip><i /><i /></Grip>
            </Figure>
          </Desktop>
          <Panel>
            <StartButton>
              <svg width="22" height="22" viewBox="0 0 22 22"><circle cx="11" cy="11" r="10.500" fill="#cfe2f2" opacity=".8" /><path d="M1 6L8 8L14 4L17 7L20 12C17 9 15 9 14 10Q18 15 17 21Q15 14 12 11Q7 14 5 20L2 17Q5 11 9 10Q4 9 1 6Z" fill="#23629d" /></svg>
            </StartButton>
            <Launchers>
              <svg width="22" height="22" viewBox="0 0 22 22"><path d="M1 3H3V1H10V3H20V20H1Z" fill="#f2f2f2" stroke="#9a9a9a" /><rect x="3.500" y="4.500" width="18" height="17" rx="1.500" fill="#5b97cf" stroke="#2f5f92" /><path d="M14 9V19L16.500 17L18 20.500L19.500 19.800L18 16.500H21Z" fill="#e8e8e8" stroke="#444" strokeWidth=".7" /></svg>
              <svg width="22" height="22" viewBox="0 0 22 22"><rect x=".5" y=".5" width="21" height="21" rx="2" fill="#1d6191" stroke="#0b2c48" /><rect x="1" y="1" width="20" height="5" fill="#0d2a46" /><path d="M2 7L7 5L10 7L7 9L6 11L9 14L7 18L5 13L3 10ZM12 6L19 5L20 9L17 11L15 14L14 11L11 9ZM15 16L18 15L19 18H16Z" fill="#a5d3e8" /></svg>
              <svg width="22" height="22" viewBox="0 0 22 22"><rect x=".5" y=".5" width="21" height="21" rx="2" fill="#e6e6e6" stroke="#555" /><rect x="1" y="1" width="20" height="5" fill="#3f78ae" /><path d="M11 3.500h2M14.500 3.500h2M18 3.500h2" stroke="#cfe0ef" strokeWidth="2" /></svg>
            </Launchers>
            <Gap $w={7} />
            <Desk />
            <Desk $current><i /></Desk>
            <Task><MplIcon s={20} /><BarText $ml={1}>Figure 2</BarText></Task>
            <Tray>
              <svg width="22" height="14" viewBox="0 0 22 14"><path d="M0 4.500H3L7 .5V13.500L3 9.500H0Z" fill="#8f8f8f" /><path d="M10 7h3M14 7h3M18 7h3" stroke="#a9a9a9" strokeWidth="1.500" /></svg>
              <Clock>21:33</Clock>
              <Power color="#5c5c5c" w={1.700} s={17} />
            </Tray>
          </Panel>
        </Browser>
      </Body>
    </Screen>
  );
}
